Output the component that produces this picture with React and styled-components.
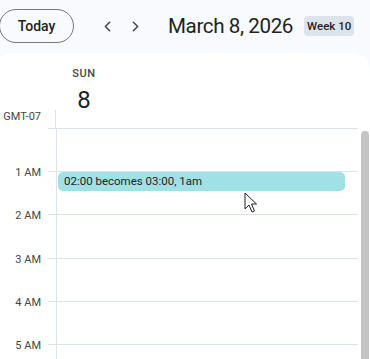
import React from 'react';
import styled, { createGlobalStyle } from 'styled-components';
import { ChevronLeft, ChevronRight } from 'lucide-react';

const GlobalStyle = createGlobalStyle`
    html, body {
        margin : 0;
        padding : 0;
        background : #f8fafd;
    }
    body {
        font-family : Roboto, "Noto Sans", Arial, sans-serif;
        color : #1f1f1f;
    }
`;

const HOUR = 43.2;

const Page = styled.div`
    width : 370px;
    height : 359px;
    overflow : hidden;
    display : flex;
    flex-direction : column;
    background : #f8fafd;
    position : relative;
`;

const Toolbar = styled.div`
    height : 53px;
    flex-shrink : 0;
    display : flex;
    align-items : center;
    padding-bottom : 1px;
    box-sizing : border-box;
    white-space : nowrap;
`;

const TodayButton = styled.button`
    flex-shrink : 0;
    margin-left : -1px;
    width : 75px;
    height : 34px;
    border : 1px solid #747775;
    border-radius : 17px;
    background : transparent;
    font-family : inherit;
    font-size : 14px;
    font-weight : 500;
    color : #1f1f1f;
    padding : 0;
`;

const NavButton = styled.button`
    flex-shrink : 0;
    width : 28px;
    height : 28px;
    border : none;
    background : transparent;
    padding : 0;
    display : flex;
    align-items : center;
    justify-content : center;
    color : #444746;
    margin-left : ${props => props.gap}px;
`;

const Title = styled.div`
    flex-shrink : 0;
    margin-left : 19px;
    font-size : 20.6px;
    color : #1f1f1f;
    letter-spacing : -0.4px;
`;

const Badge = styled.span`
    flex-shrink : 0;
    margin-left : 11px;
    background : #dde3ea;
    border-radius : 4px;
    font-size : 11.5px;
    font-weight : 500;
    padding : 3px 3px;
    color : #1f1f1f;
`;

const Panel = styled.div`
    flex : 1;
    margin-left : -6px;
    background : #fff;
    border-radius : 18px 18px 0 0;
    display : flex;
    flex-direction : column;
    overflow : hidden;
`;

const DayHead = styled.div`
    height : 75px;
    flex-shrink : 0;
    display : flex;
`;

const ZoneCell = styled.div`
    width : 62px;
    position : relative;
    display : flex;
    align-items : flex-end;
    justify-content : flex-end;
    padding : 0 15px 5px 0;
    box-sizing : border-box;
    font-size : 11px;
    color : #444746;

    &::after {
        content : '';
        position : absolute;
        right : 0;
        bottom : 0;
        width : 1px;
        height : 18px;
        background : #dde3ea;
    }
`;

const DayLabel = styled.div`
    width : 56px;
    display : flex;
    flex-direction : column;
    align-items : center;
    padding-top : 14px;

    .weekday {
        font-size : 11px;
        font-weight : 500;
        letter-spacing : 0.6px;
        color : #444746;
        line-height : 13px;
    }
    .date {
        margin-top : 5px;
        font-size : 24px;
        line-height : 30px;
        color : #1f1f1f;
    }
`;

const Body = styled.div`
    flex : 1;
    display : flex;
`;

const Gutter = styled.div`
    width : 62px;
    flex-shrink : 0;
`;

const HourLabel = styled.div`
    display : flow-root;
    height : ${HOUR}px;
    position : relative;
    text-align : right;
    padding-right : 15px;
    box-sizing : border-box;
    font-size : 11px;
    line-height : 12px;
    color : #444746;

    span {
        display : block;
        margin-top : -4px;
    }

    &::after {
        content : '';
        position : absolute;
        top : 0;
        right : 0;
        width : 8px;
        height : 1px;
        background : #dde3ea;
    }
`;

const DayColumn = styled.div`
    flex : 1;
    position : relative;
    border-left : 1px solid #dde3ea;
`;

const Slot = styled.div`
    height : ${HOUR}px;
    border-top : 1px solid #dde3ea;
    box-sizing : border-box;
`;

const Event = styled.div`
    position : absolute;
    top : ${props => props.start * HOUR + 1}px;
    left : 1px;
    right : 13px;
    height : 19px;
    border-radius : 5px;
    background : #a0e1e6;
    font-size : 11.5px;
    line-height : 19px;
    padding-left : 6px;
    color : #1f1f1f;
`;

const ScrollTrack = styled.div`
    width : 12px;
    flex-shrink : 0;
    padding : 3px 1px 0 3px;
    box-sizing : border-box;
    display : flex;
`;

const Thumb = styled.div`
    flex : 1;
    background : #c4c4c4;
    border-radius : 4px 4px 0 0;
`;

const Cursor = styled.svg`
    position : absolute;
    left : 244px;
    top : 192px;
`;

const hours = ['', '1 AM', '2 AM', '3 AM', '4 AM', '5 AM'];

const App = () => {
    return (
        <Page>
            <GlobalStyle />
            <Toolbar>
                <TodayButton>Today</TodayButton>
                <NavButton gap={19}><ChevronLeft size={17} strokeWidth={2.2} /></NavButton>
                <NavButton gap={0}><ChevronRight size={17} strokeWidth={2.2} /></NavButton>
                <Title>March 8, 2026</Title>
                <Badge>Week 10</Badge>
            </Toolbar>
            <Panel>
                <DayHead>
                    <ZoneCell>GMT-07</ZoneCell>
                    <DayLabel>
                        <span className="weekday">SUN</span>
                        <span className="date">8</span>
                    </DayLabel>
                </DayHead>
                <Body>
                    <Gutter>
                        {hours.map((h, i) => (
                            <HourLabel key={i}><span>{h || '\u00a0'}</span></HourLabel>
                        ))}
                    </Gutter>
                    <DayColumn>
                        {hours.map((h, i) => <Slot key={i} />)}
                        <Event start={1}>02:00 becomes 03:00, 1am</Event>
                    </DayColumn>
                    <ScrollTrack><Thumb /></ScrollTrack>
                </Body>
            </Panel>
            <Cursor width="14" height="22" viewBox="0 0 14 22">
                <path d="M1 1 L1 17 L5 13 L8 20 L10.5 19 L7.5 12 L12.5 12 Z" fill="#fff" stroke="#1f1f1f" strokeWidth="1" strokeLinejoin="round" />
            </Cursor>
        </Page>
    );
};

export default App;
